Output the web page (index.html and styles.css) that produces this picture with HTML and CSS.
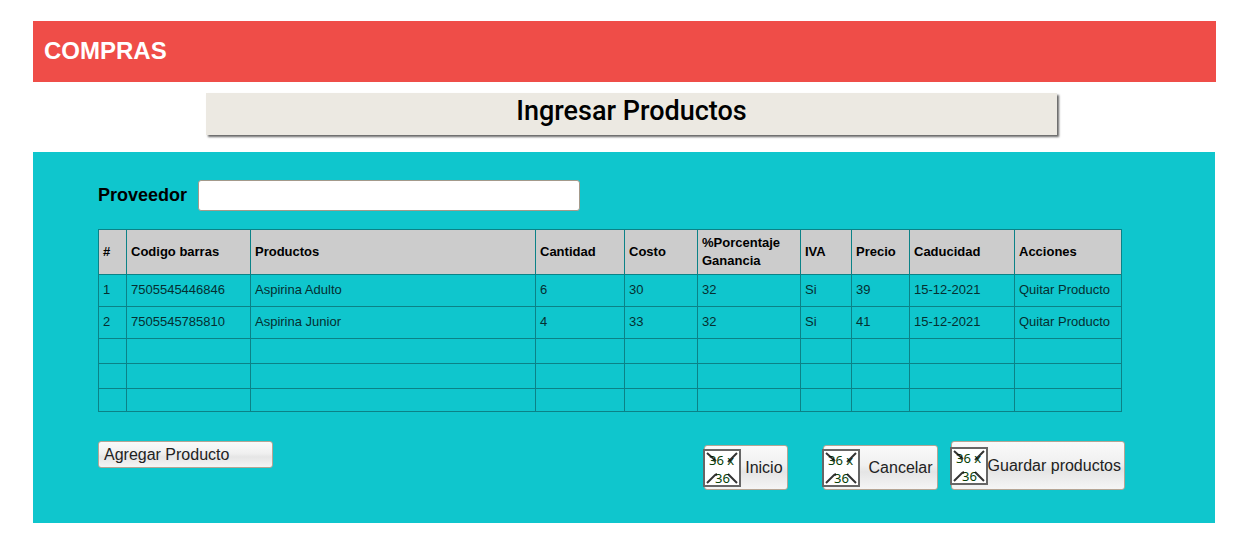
FILE: index.html
```html
<!DOCTYPE html>
<html lang="es">
<head>
<meta charset="utf-8">
<title>Compras</title>
<link rel="stylesheet" href="styles.css">
</head>
<body>
<header class="banner"><h1 class="banner-title">COMPRAS</h1></header>
<h2 class="page-title">Ingresar Productos</h2>
<main class="panel">
  <div class="field">
    <label class="field-label" for="proveedor">Proveedor</label>
    <input class="field-input" id="proveedor" type="text">
  </div>
  <table class="products">
    <colgroup>
      <col class="col-num"><col class="col-code"><col><col class="col-qty"><col class="col-cost"><col class="col-gain"><col class="col-tax"><col class="col-price"><col class="col-date"><col class="col-actions">
    </colgroup>
    <thead>
      <tr><th>#</th><th>Codigo barras</th><th>Productos</th><th>Cantidad</th><th>Costo</th><th>%Porcentaje Ganancia</th><th>IVA</th><th>Precio</th><th>Caducidad</th><th>Acciones</th></tr>
    </thead>
    <tbody>
      <tr><td>1</td><td>7505545446846</td><td>Aspirina Adulto</td><td>6</td><td>30</td><td>32</td><td>Si</td><td>39</td><td>15-12-2021</td><td>Quitar Producto</td></tr>
      <tr><td>2</td><td>7505545785810</td><td>Aspirina Junior</td><td>4</td><td>33</td><td>32</td><td>Si</td><td>41</td><td>15-12-2021</td><td>Quitar Producto</td></tr>
      <tr class="empty"><td></td><td></td><td></td><td></td><td></td><td></td><td></td><td></td><td></td><td></td></tr>
      <tr class="empty"><td></td><td></td><td></td><td></td><td></td><td></td><td></td><td></td><td></td><td></td></tr>
      <tr class="empty"><td></td><td></td><td></td><td></td><td></td><td></td><td></td><td></td><td></td><td></td></tr>
    </tbody>
  </table>
  <div class="actions">
    <button class="button button-add" type="button">Agregar Producto</button>
    <button class="button button-home" type="button">
      <svg class="icon" viewBox="0 0 38 38" aria-hidden="true"><rect class="icon-box" x="1" y="1" width="36" height="36"/><text x="6" y="16">36 x</text><text x="12" y="34">36</text><path class="icon-lines" d="M4 4l9 8M34 4l-9 9M4 34l8-8l2-1M34 34l-9-9"/></svg>
      Inicio
    </button>
    <button class="button button-cancel" type="button">
      <svg class="icon" viewBox="0 0 38 38" aria-hidden="true"><rect class="icon-box" x="1" y="1" width="36" height="36"/><text x="6" y="16">36 x</text><text x="12" y="34">36</text><path class="icon-lines" d="M4 4l9 8M34 4l-9 9M4 34l8-8l2-1M34 34l-9-9"/></svg>
      Cancelar
    </button>
    <button class="button button-save" type="button">
      <svg class="icon" viewBox="0 0 38 38" aria-hidden="true"><rect class="icon-box" x="1" y="1" width="36" height="36"/><text x="6" y="16">36 x</text><text x="12" y="34">36</text><path class="icon-lines" d="M4 4l9 8M34 4l-9 9M4 34l8-8l2-1M34 34l-9-9"/></svg>
      Guardar productos
    </button>
  </div>
</main>
</body>
</html>
```
FILE: styles.css
```css
* { box-sizing: border-box; }

body {
  margin: 0;
  padding: 21px 34px 20px 33px;
  background: #fff;
  color: #000;
  font-family: "Liberation Sans", Arial, sans-serif;
}

.banner {
  padding: 16px 11px 17px;
  background: #ef4d48;
}

.banner-title {
  margin: 0;
  color: #fff;
  font-size: 24px;
  line-height: 28px;
}

.page-title {
  width: 72%;
  margin: 11px 0 17px;
  margin-left: calc(14% + 7px);
  padding: 2px 0 8px;
  background: #ece9e2;
  box-shadow: 2px 2px 2px #666;
  font: 500 27px/32px Roboto, sans-serif;
  text-align: center;
}

.panel {
  margin-right: 1px;
  padding: 28px 90px 33px 65px;
  background: #0fc6cd;
}

.field {
  display: flex;
  align-items: center;
  gap: 11px;
}

.field-label {
  font-size: 18px;
  font-weight: bold;
}

.field-input {
  width: 382px;
  height: 31px;
  padding: 0 6px;
  border: 1px solid #a39a8b;
  border-radius: 3px;
  background: #fff;
  font: 16px "Liberation Sans", Arial, sans-serif;
}

.products {
  width: calc(100% - 3px);
  margin-top: 18px;
  border-collapse: collapse;
  table-layout: fixed;
  font-size: 13px;
  line-height: 18px;
}

.products th,
.products td {
  padding: 0 4px;
  border: 1px solid #0b8287;
  text-align: left;
}

.products th { height: 45px; background: #ccc; }
.products td { height: 32px; padding-bottom: 2px; color: #052f31; }
.products .empty td { height: 25px; }
.products .empty:last-child td { height: 23px; }

.col-num { width: 28px; }
.col-code { width: 124px; }
.col-qty { width: 89px; }
.col-cost { width: 73px; }
.col-gain { width: 103px; }
.col-tax { width: 51px; }
.col-price { width: 58px; }
.col-date { width: 105px; }
.col-actions { width: 107px; }

.actions {
  display: flex;
  align-items: flex-end;
  margin-top: 29px;
}

.button {
  display: flex;
  align-items: center;
  height: 45px;
  padding: 0 4px 0 0;
  border: 1px solid #b5a594;
  border-radius: 3px;
  background: linear-gradient(#fafafa, #f0f0f0 45%, #e5e5e5 60%, #f5f5f5);
  color: #222;
  font: 16px "Liberation Sans", Arial, sans-serif;
  white-space: nowrap;
}

.button-add {
  align-self: flex-start;
  width: 175px;
  height: 27px;
  margin-right: auto;
  padding: 0 5px;
}

.button-home { gap: 4px; margin-right: 35px; }
.button-cancel { gap: 9px; margin-right: 13px; }
.button-save { height: 49px; padding-right: 3px; }

.icon {
  flex: none;
  width: 38px;
  height: 38px;
  margin-left: -2px;
  fill: #064006;
  font-family: "Noto Sans", sans-serif;
  font-size: 13px;
}

.icon-box { fill: #fff; stroke: #666; stroke-width: 2px; }
.icon-lines { fill: none; stroke: #000; stroke-width: 2px; stroke-opacity: 0.8; }
```
